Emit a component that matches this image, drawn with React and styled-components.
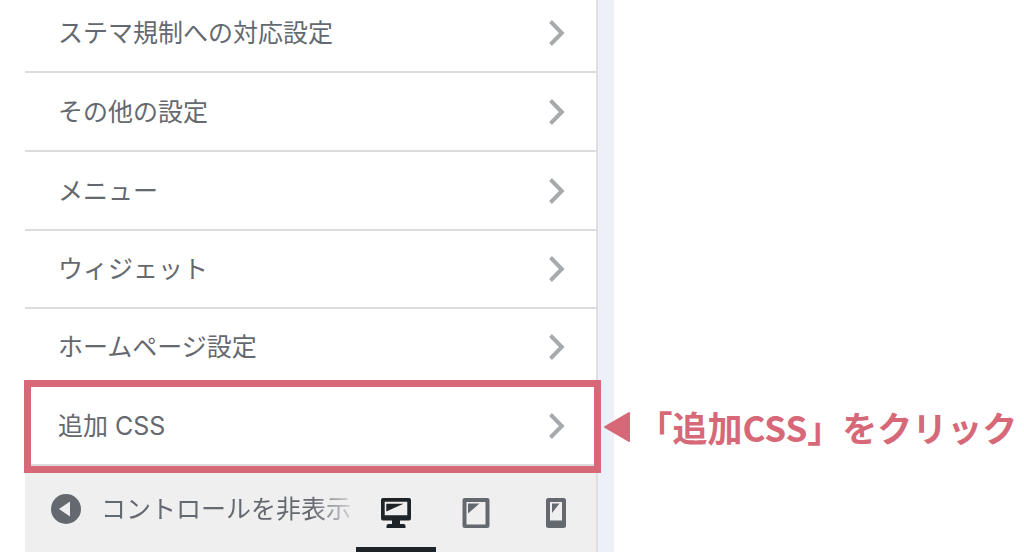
import React from 'react';
import styled, { createGlobalStyle } from 'styled-components';

const GlobalStyle = createGlobalStyle`
  *, *::before, *::after {
    box-sizing: border-box;
  }

  body {
    margin: 0;
    background-color: #fff;
    color: #646970;
    font-family: 'Inter', 'Noto Sans CJK JP', sans-serif;
    font-size: 25px;
    line-height: 36px;
  }
`;

const Page = styled.div`
  display: flex;
  padding-left: 25px;
  overflow: hidden;
`;

const Sidebar = styled.aside`
  width: 57.4%;
  flex-shrink: 0;
  border-right: 2px solid #dfdfe2;
  background-color: #fff;
`;

const Gutter = styled.div`
  width: 16px;
  flex-shrink: 0;
  background-color: #edf0f9;
`;

/* The list is scrolled a little, its first row is cut by the top edge */
const SectionList = styled.ul`
  margin: -6px 0 0;
  padding: 0;
  list-style: none;
`;

const SectionItem = styled.li`
  position: relative;
`;

const SectionButton = styled.button`
  display: flex;
  align-items: center;
  justify-content: space-between;
  width: 100%;
  height: ${(props) => (props.$compact ? 78 : 79)}px;
  padding: 0 31px 0 33px;
  border: 0;
  border-bottom: 2px solid #dcdcde;
  background-color: #fff;
  color: inherit;
  font: inherit;
  text-align: left;
  cursor: pointer;
`;

const Highlight = styled.div`
  position: absolute;
  top: -7px;
  right: -5px;
  bottom: -7px;
  left: -1px;
  border: 7px solid #d66878;
  pointer-events: none;
`;

const Callout = styled.p`
  position: absolute;
  top: 0;
  bottom: 0;
  left: 100%;
  display: flex;
  align-items: center;
  gap: 6px;
  margin: 0 0 0 7px;
  color: #d66878;
  font-family: 'Noto Sans CJK JP', sans-serif;
  font-size: 35px;
  font-weight: 700;
  white-space: nowrap;
`;

const Footer = styled.footer`
  display: flex;
  height: 86px;
  background-color: #efefef;
`;

const CollapseButton = styled.button`
  display: flex;
  flex: 1;
  align-items: center;
  gap: 20px;
  min-width: 0;
  padding: 0 4px 0 26px;
  border: 0;
  background: none;
  color: inherit;
  font: inherit;
  cursor: pointer;

  svg {
    flex-shrink: 0;
  }
`;

const CollapseLabel = styled.span`
  flex: 1;
  text-align: left;
  white-space: nowrap;
  mask-image: linear-gradient(to right, #000 calc(100% - 40px), rgba(0, 0, 0, 0.2));
`;

const Devices = styled.div`
  display: flex;
`;

const DeviceButton = styled.button`
  display: flex;
  align-items: center;
  justify-content: center;
  width: 80px;
  padding: 12px 0 0;
  border: 0;
  border-bottom: 5px solid ${(props) => (props.$active ? '#1d2327' : 'transparent')};
  background: none;
  color: ${(props) => (props.$active ? '#1d2327' : '#646970')};
  cursor: pointer;
`;

const Chevron = () => (
  <svg width="16" height="26" viewBox="0 0 16 26" fill="none" aria-hidden="true">
    <path d="M1.5 1.5 L12.8 13 L1.5 24.5" stroke="#a7aaad" strokeWidth="4" />
  </svg>
);

const CollapseIcon = () => (
  <svg width="30" height="30" viewBox="0 0 30 30" aria-hidden="true">
    <circle cx="15" cy="15" r="15" fill="#646970" />
    <path d="M19 7.5 V22.5 L8 15 Z" fill="#efefef" />
  </svg>
);

const DesktopIcon = () => (
  <svg width="32" height="32" viewBox="0 0 32 32" fill="currentColor" aria-hidden="true">
    <path
      fillRule="evenodd"
      d="M3 1 H29 Q31 1 31 3 V21.5 Q31 23.5 29 23.5 H20 V27 H23.5 Q25.5 27 25.5 29 V31 H6.5 V29 Q6.5 27 8.5 27 H12 V23.5 H3 Q1 23.5 1 21.5 V3 Q1 1 3 1 Z M4.7 4.7 V18.3 H27.3 V4.7 Z"
    />
    <path d="M6.3 6.8 H23.5 L6.3 14.5 Z" />
  </svg>
);

const TabletIcon = () => (
  <svg width="28" height="32" viewBox="0 0 28 32" fill="currentColor" aria-hidden="true">
    <path
      fillRule="evenodd"
      d="M3 1 H25 Q27.5 1 27.5 3 V29 Q27.5 31 25 31 H3 Q.5 31 .5 29 V3 Q.5 1 3 1 Z M4.5 5 V27.5 H23.5 V5 Z"
    />
    <path d="M6 6.5 H17.5 L6 16.5 Z" />
  </svg>
);

const MobileIcon = () => (
  <svg width="20" height="32" viewBox="0 0 20 32" fill="currentColor" aria-hidden="true">
    <path
      fillRule="evenodd"
      d="M2.5 1 H17.5 Q20 1 20 3 V29 Q20 31 17.5 31 H2.5 Q0 31 0 29 V3 Q0 1 2.5 1 Z M4 5 V23.5 H16 V5 Z"
    />
    <path d="M6 6.5 H13.5 L6 16 Z" />
  </svg>
);

const ArrowIcon = () => (
  <svg width="28" height="32" viewBox="0 0 28 32" aria-hidden="true">
    <path d="M26 2 V30 L2 16 Z" fill="#d66878" stroke="#d66878" strokeWidth="2" strokeLinejoin="round" />
  </svg>
);

const sections = [
  { title: 'ステマ規制への対応設定' },
  { title: 'その他の設定' },
  { title: 'メニュー' },
  { title: 'ウィジェット', compact: true },
  { title: 'ホームページ設定', compact: true },
  { title: '追加 CSS', callout: '「追加CSS」をクリック' },
];

const devices = [
  { name: 'desktop', Icon: DesktopIcon },
  { name: 'tablet', Icon: TabletIcon },
  { name: 'mobile', Icon: MobileIcon },
];

const App = () => (
  <>
    <GlobalStyle />
    <Page>
      <Sidebar>
        <SectionList>
          {sections.map(({ title, compact, callout }) => (
            <SectionItem key={title}>
              <SectionButton type="button" $compact={compact}>
                {title}
                <Chevron />
              </SectionButton>
              {callout && (
                <>
                  <Highlight />
                  <Callout>
                    <ArrowIcon />
                    {callout}
                  </Callout>
                </>
              )}
            </SectionItem>
          ))}
        </SectionList>
        <Footer>
          <CollapseButton type="button">
            <CollapseIcon />
            <CollapseLabel>コントロールを非表示</CollapseLabel>
          </CollapseButton>
          <Devices>
            {devices.map(({ name, Icon }) => (
              <DeviceButton key={name} type="button" aria-label={name} $active={name === 'desktop'}>
                <Icon />
              </DeviceButton>
            ))}
          </Devices>
        </Footer>
      </Sidebar>
      <Gutter />
    </Page>
  </>
);

export default App;
